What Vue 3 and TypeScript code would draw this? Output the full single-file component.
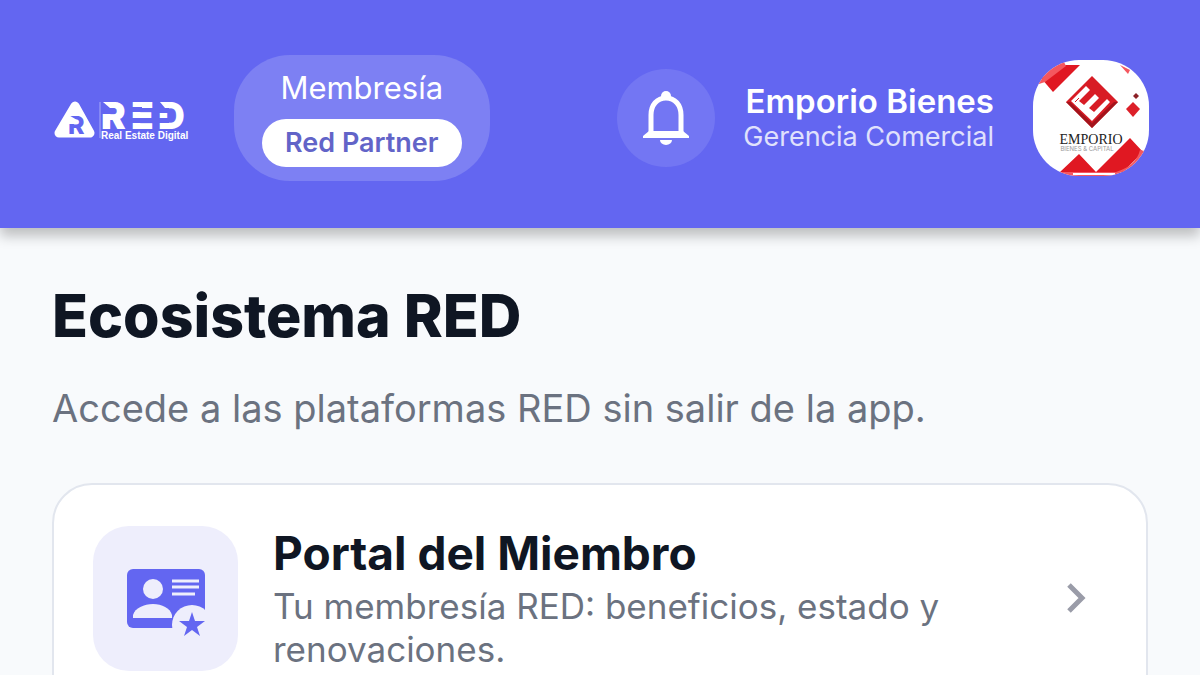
<script setup lang="ts">
interface Platform {
  title: string
  description: string
}

const membership = { label: 'Membresía', plan: 'Red Partner' }
const account = { name: 'Emporio Bienes', role: 'Gerencia Comercial' }
const platforms: Platform[] = [
  {
    title: 'Portal del Miembro',
    description: 'Tu membresía RED: beneficios, estado y renovaciones.',
  },
]
</script>

<template>
  <div class="app">
    <header class="topbar">
      <svg class="logo" viewBox="0 -8 138 52" role="img" aria-label="RED Real Estate Digital">
        <path d="M23 6 L38 33 H7 Z" fill="#fff" stroke="#fff" stroke-width="9" stroke-linejoin="round" />
        <text class="logo-mark" x="16" y="34">R</text>
        <path d="M15 14 L25 20 V24 H15 Z" fill="#fff" />
        <path d="M48 2 V38" stroke="#a9abf8" stroke-width="1" />
        <text class="logo-word" y="29"><tspan x="49">R</tspan><tspan x="79">E</tspan><tspan x="106">D</tspan></text>
        <path d="M50 1 L62 9 V14 H50 Z M80 7 H90 V12 H80 Z M80 18 H90 V23 H80 Z M107 1 L117 8 V13 H107 Z M107 18 H117 V23 H107 Z" fill="#6366f1" />
        <path d="M51 2 H62 V8 H58 Z M108 2 H118 V8 H113 Z" fill="#fff" />
        <text class="logo-caption" x="49" y="39">Real Estate Digital</text>
      </svg>

      <div class="membership">
        <span class="membership-label">{{ membership.label }}</span>
        <span class="membership-plan">{{ membership.plan }}</span>
      </div>

      <div class="account">
        <button class="bell" type="button" aria-label="Notificaciones">
          <svg viewBox="0 0 48 56" aria-hidden="true">
            <path d="M9 44 V25 C9 15 15 8 24 8 C33 8 39 15 39 25 V44" fill="none" stroke="#fff" stroke-width="5" />
            <path d="M19 8 V6 A5 5 0 0 1 29 6 V8 Z" fill="#fff" />
            <path d="M7 41 H41 L47 46 V48 H1 V46 Z" fill="#fff" />
            <path d="M18 50 H30 A6 5 0 0 1 18 50 Z" fill="#fff" />
          </svg>
        </button>
        <div class="who">
          <span class="who-name">{{ account.name }}</span>
          <span class="who-role">{{ account.role }}</span>
        </div>
        <svg class="avatar" viewBox="0 0 116 116" role="img" aria-label="Emporio">
          <rect width="116" height="116" fill="#fff" />
          <path d="M8 18 L30 5 H47 L20 32 Z" fill="#e01822" />
          <path d="M6 24 L12 22 L33 6 L30 0 H0 Z" fill="#f4575f" />
          <path d="M87 5 L95 14 L97 10 Z" fill="#f4575f" />
          <path d="M59 16 L85 42 L59 68 L33 42 Z" fill="#d81c25" />
          <path d="M33 42 L59 68 L85 42 L81 42 L59 63 L37 42 Z" fill="#a3141c" />
          <path d="M38 41 L53 26 L57 30 L46 41 L51 45 L62 34 L66 38 L56 48 L61 52 L74 39 L77 42 L59 61 Z" fill="#fff" />
          <path d="M42 42 L46 38" stroke="#d81c25" stroke-width="1" />
          <path d="M100 42 L107 49 L100 57 L93 49 Z" fill="#dc2029" />
          <path d="M103 33 L106 36 L103 39 L100 36 Z" fill="#8c2026" />
          <path d="M27 112 L46 94 L63 112 Z M63 112 L97 78 L110 92 L90 112 Z" fill="#e01822" />
          <path d="M27 112 H83 Q103 106 107 90 L116 92 V116 H27 Z" fill="#f4575f" />
          <path d="M40 114 H82" stroke="#fff" stroke-width="2" />
          <text class="avatar-word" x="58" y="84" text-anchor="middle">EMPORIO</text>
          <text class="avatar-caption" x="54" y="91" text-anchor="middle">BIENES &amp; CAPITAL</text>
        </svg>
      </div>
    </header>

    <main class="content">
      <h1>Ecosistema RED</h1>
      <p class="lead">Accede a las plataformas RED sin salir de la app.</p>

      <a v-for="item in platforms" :key="item.title" class="card" href="#">
        <span class="tile">
          <svg viewBox="0 -10 80 80" aria-hidden="true">
            <rect x="1" y="1" width="78" height="59" rx="6" fill="#6366f1" />
            <circle cx="27" cy="21" r="10" fill="#eeeefc" />
            <path d="M7 50 V47 C9 40 18 36 27 36 C36 36 44 40 46 47 V50 Z" fill="#eeeefc" />
            <path d="M46 13 H73 M46 19 H73 M46 26 H69" stroke="#eeeefc" stroke-width="3" />
            <circle cx="66" cy="57" r="20" fill="#eeeefc" />
            <path d="M66 44 L69 53 H79 L71 59 L74 68 L66 62 L58 68 L61 59 L53 53 H63 Z" fill="#6366f1" />
          </svg>
        </span>
        <span class="card-text">
          <strong class="card-title">{{ item.title }}</strong>
          <span class="card-description">{{ item.description }}</span>
        </span>
        <svg class="chevron" viewBox="0 0 20 32" aria-hidden="true">
          <path d="M3 3 L16 16 L3 29" fill="none" stroke="#9a9ca8" stroke-width="5" />
        </svg>
      </a>
    </main>
  </div>
</template>

<style>
html {
  scrollbar-width: none;
}

body {
  margin: 0;
  background: #f8fafc;
}
</style>

<style scoped>
.app {
  height: 100vh;
  overflow: hidden;
  background: #f8fafc;
  font-family: Inter, "Liberation Sans", sans-serif;
}

.topbar {
  display: flex;
  align-items: center;
  box-sizing: border-box;
  padding: 55px 51px 47px 52px;
  background: #6366f1;
  box-shadow: 0 8px 12px rgba(0, 0, 0, 0.24);
  color: #fff;
}

.logo {
  flex: none;
  width: 138px;
  height: 52px;
  margin-right: 44px;
}

.logo-mark {
  fill: #6366f1;
  font-size: 25px;
  font-weight: 800;
}

.logo-word {
  fill: #fff;
  font-size: 37px;
  font-weight: 900;
}

.logo-caption {
  fill: #fff;
  font-family: "Liberation Sans", Arial, sans-serif;
  font-size: 10px;
  font-weight: 700;
}

.membership {
  display: flex;
  flex-direction: column;
  align-items: center;
  gap: 12px;
  padding: 14px 28px;
  border-radius: 56px;
  background: #7d80f3;
}

.membership-label {
  font-size: 31px;
  font-weight: 400;
  line-height: 38px;
}

.membership-plan {
  padding: 0 23px;
  border-radius: 24px;
  background: #fff;
  color: #6264c8;
  font-size: 27px;
  font-weight: 600;
  line-height: 48px;
}

.account {
  display: flex;
  align-items: center;
  margin-left: auto;
}

.bell {
  display: flex;
  align-items: center;
  justify-content: center;
  width: 98px;
  height: 98px;
  margin-right: 28px;
  padding: 0;
  border: 0;
  border-radius: 50%;
  background: #7376f3;
}

.bell svg {
  width: 48px;
  height: 56px;
}

.who {
  display: flex;
  flex-direction: column;
  align-items: flex-end;
  margin-right: 39px;
}

.who-name {
  font-size: 33px;
  font-weight: 600;
  line-height: 38px;
}

.who-role {
  color: #e0e1fc;
  font-size: 27px;
  line-height: 34px;
}

.avatar {
  width: 116px;
  height: 116px;
  border-radius: 46px;
}

.avatar-word {
  fill: #222;
  font-family: "Liberation Serif", serif;
  font-size: 14px;
}

.avatar-caption {
  fill: #999;
  font-size: 6px;
}

.content {
  padding: 52px 52px 40px;
}

h1 {
  margin: 0;
  color: #0f1623;
  font-size: 59px;
  font-weight: 800;
  line-height: 72px;
}

.lead {
  margin: 32px 0 51px;
  color: #6b7280;
  font-size: 38px;
  line-height: 48px;
}

.card {
  display: flex;
  align-items: center;
  padding: 40px 40px 40px 39px;
  border: 2px solid #e2e6ee;
  border-radius: 40px;
  background: #fff;
  color: inherit;
  text-decoration: none;
}

.tile {
  display: flex;
  flex: none;
  align-items: center;
  justify-content: center;
  width: 145px;
  height: 145px;
  border-radius: 36px;
  background: #eeeefc;
}

.tile svg {
  width: 80px;
  height: 80px;
}

.card-text {
  display: flex;
  flex: 1;
  flex-direction: column;
  gap: 4px;
  margin: 0 80px 0 35px;
}

.card-title {
  color: #0f1623;
  font-size: 46px;
  font-weight: 700;
  line-height: 56px;
}

.card-description {
  color: #6b7280;
  font-size: 35px;
  line-height: 43px;
}

.chevron {
  flex: none;
  width: 20px;
  height: 32px;
  margin-right: 20px;
}
</style>
